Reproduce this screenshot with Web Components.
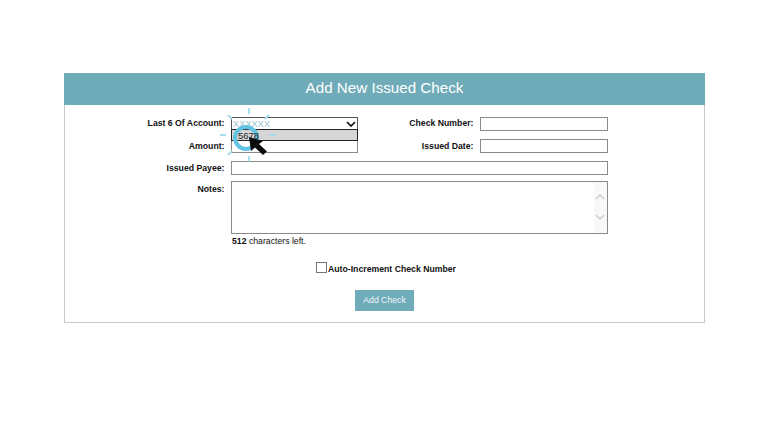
<!DOCTYPE html>
<html><head><meta charset="utf-8"><style>
html,body{margin:0;padding:0;background:#fff}
body{width:768px;height:432px;overflow:hidden;font-family:"Liberation Sans",Arial,sans-serif;padding-top:73px;box-sizing:border-box}
</style></head><body>
<check-form></check-form>
<script>
class FormLabel extends HTMLElement{constructor(){super();this.attachShadow({mode:'open'}).innerHTML=`<style>:host{display:block;text-align:right;font:bold 8.7px/13px "Liberation Sans",Arial,sans-serif;color:#111;white-space:nowrap}</style><slot></slot>`}}
class TextBox extends HTMLElement{constructor(){super();this.attachShadow({mode:'open'}).innerHTML=`<style>:host{display:block;box-sizing:border-box;height:14px;border:1px solid #8a8a8a;background:#fff}</style>`}}
class NotesBox extends HTMLElement{constructor(){super();this.attachShadow({mode:'open'}).innerHTML=`<style>:host{display:flex;justify-content:flex-end;box-sizing:border-box;height:53px;border:1px solid #8a8a8a;background:#fff}
.bar{width:13px;background:#f8f8f8;display:flex;flex-direction:column;align-items:center;padding-top:11px;gap:12px}
svg{display:block}</style><div class="bar"><svg width="10" height="8" viewBox="0 0 10 8"><path d="M1 6l4-4 4 4" fill="none" stroke="#c9c9c9" stroke-width="1.3"/></svg><svg width="10" height="8" viewBox="0 0 10 8"><path d="M1 2l4 4 4-4" fill="none" stroke="#c9c9c9" stroke-width="1.3"/></svg></div>`}}
class AccountSelect extends HTMLElement{constructor(){super();this.attachShadow({mode:'open'}).innerHTML=`<style>:host{display:block;position:relative;box-sizing:border-box;height:14px;border:1px solid #555;background:#fff;font:9px/12px "Liberation Sans",Arial,sans-serif}
.val{color:#9cc3d0;padding-left:1px;letter-spacing:.2px;display:block}
.arrow{position:absolute;right:1px;top:2px}
.list{position:absolute;left:-1px;right:-1px;top:11px;height:12px;box-sizing:border-box;border:1px solid #222;background:#d6d6d6;color:#222;font:9.5px/11px "Liberation Sans",Arial,sans-serif;padding-left:6px}
.list span{position:relative;z-index:2}
.fx{position:absolute;left:-11px;top:-10px;pointer-events:none;overflow:visible;z-index:1}
.cursor{z-index:3}</style><span class="val">XXXXXX</span><svg class="arrow" width="10" height="8" viewBox="0 0 10 8"><path d="M1 2l4 4 4-4" fill="none" stroke="#111" stroke-width="1.7"/></svg><div class="list"><span>5678</span></div>
<svg class="fx" width="60" height="62" viewBox="0 0 60 62"><g stroke="#a9dcea" stroke-width="2.2" fill="none"><path d="M28 0v6M28 48v5.500M-1 27h6M49 27h6M7 7l4 4M48 7l-4 4M7 47l4-4"/></g><circle cx="25" cy="30" r="11" fill="none" stroke="#63c3e2" stroke-width="4"/></svg>
<svg class="fx cursor" width="60" height="62" viewBox="0 0 60 62"><path d="M28 29L30 43L34 39.500L42 47L46 43.500L38 36L42 33Z" fill="#0c0c0c"/></svg>`}}
class AddButton extends HTMLElement{constructor(){super();this.attachShadow({mode:'open'}).innerHTML=`<style>:host{display:block;width:59.5px;height:21px;background:#6fabb8;color:#eef6f8;font:8.7px/21px "Liberation Sans",Arial,sans-serif;text-align:center}</style><slot></slot>`}}
class CheckForm extends HTMLElement{constructor(){super();this.attachShadow({mode:'open'}).innerHTML=`<style>
:host{display:block;box-sizing:border-box;width:641px;height:250px;margin-left:64px;border:1px solid #c9c9c9;border-top:0;background:#fff;color:#111}
header{height:32px;background:#6fabb8;color:#fff;font:15.2px/30px "Liberation Sans",Arial,sans-serif;text-align:center;margin:0 -1px}
.grid{display:grid;grid-template-columns:159.5px 127px 109px 127.5px;column-gap:6.5px;row-gap:8px;margin-top:12px;align-items:center}
.wide{grid-column:2/5}
.grid>*{min-width:0}
.tall{align-self:start}
.up{margin-top:-2px}
notes-box{margin-top:-2px}
.count{margin:1px 0 0 167px;font:8.7px/12px "Liberation Sans",Arial,sans-serif}
.auto{display:flex;justify-content:center;align-items:center;gap:1px;margin-top:15px;padding-left:3px;font:bold 8.7px/14px "Liberation Sans",Arial,sans-serif}
.box{width:9px;height:9px;border:1px solid #777;margin-top:-3px}
.actions{display:flex;justify-content:center;margin-top:14px}
.sel{z-index:1}
</style>
<header>Add New Issued Check</header>
<div class="grid">
<form-label class="up">Last 6 Of Account:</form-label><account-select class="sel"></account-select><form-label class="up">Check Number:</form-label><text-box></text-box>
<form-label>Amount:</form-label><text-box></text-box><form-label>Issued Date:</form-label><text-box></text-box>
<form-label>Issued Payee:</form-label><text-box class="wide"></text-box>
<form-label class="tall">Notes:</form-label><notes-box class="wide"></notes-box>
</div>
<div class="count"><b>512</b> characters left.</div>
<div class="auto"><span class="box"></span><span>Auto-Increment Check Number</span></div>
<div class="actions"><add-button>Add Check</add-button></div>`}}
customElements.define('form-label',FormLabel);
customElements.define('text-box',TextBox);
customElements.define('notes-box',NotesBox);
customElements.define('account-select',AccountSelect);
customElements.define('add-button',AddButton);
customElements.define('check-form',CheckForm);
</script></body></html>
